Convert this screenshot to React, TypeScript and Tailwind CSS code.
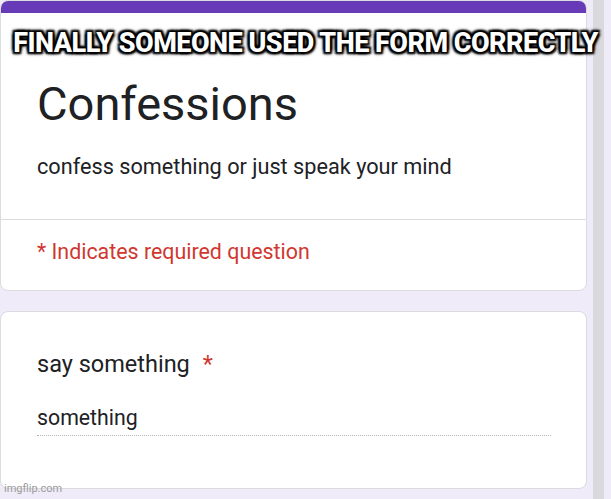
export default function App() {
  return (
    <div
      className="relative flex h-[499px] w-[611px] overflow-hidden bg-[#f0ebf8]"
      style={{ fontFamily: "Roboto, 'Liberation Sans', sans-serif" }}
    >
      <div className="flex w-[587px] flex-col gap-[20px]">
        {/* header card */}
        <div className="h-[291px] overflow-hidden rounded-lg border border-[#dadce0] bg-white">
          <div className="h-[12px] bg-[#673ab7]" />
          <div className="px-[36px] pt-[63px]">
            <h1 className="text-[47px] leading-[56px] text-[#202124]">Confessions</h1>
            <p className="mt-[21px] text-[21.7px] leading-[28px] text-[#202124]">
              confess something or just speak your mind
            </p>
          </div>
          <div className="mt-[38px] border-t border-[#dadce0] px-[36px] pt-[18px]">
            <p className="text-[21.4px] leading-[28px] text-[#d0382f]">* Indicates required question</p>
          </div>
        </div>

        {/* question card */}
        <div className="h-[178px] rounded-lg border border-[#dadce0] bg-white px-[36px] pt-[37px]">
          <div className="flex items-start text-[23.5px] leading-[30px] text-[#202124]">
            <span>say something</span>
            <span className="ml-[13px] text-[#d0382f]">*</span>
          </div>
          <div className="mt-[26px] w-[514px] border-b border-dotted border-[#b8b8b8] pb-[4px] text-[21.3px] leading-[26px] text-[#202124]">
            something
          </div>
        </div>
      </div>

      {/* scrollbar */}
      <div className="ml-[6px] h-full w-[11px] bg-[#d9d9de]" />

      {/* meme caption */}
      <div
        className="absolute left-0 top-[28px] w-[611px] text-center text-[27px] font-extrabold leading-[30px] tracking-[-0.5px] text-white"
        style={{
          textShadow:
            "0 0 3px #000, 0 0 4px #000, 0 0 5px #000, 2px 2px 2px #000, -2px -2px 2px #000, 2px -2px 2px #000, -2px 2px 2px #000",
        }}
      >
        FINALLY SOMEONE USED THE FORM CORRECTLY
      </div>

      {/* watermark */}
      <div className="absolute bottom-[3px] left-[4px] text-[11px] leading-[14px] text-[#9a9a9a]">imgflip.com</div>
    </div>
  );
}
